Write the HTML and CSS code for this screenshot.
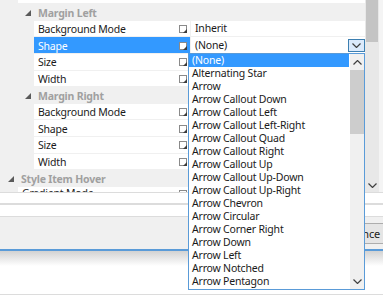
FILE: index.html
```html
<!DOCTYPE html>
<html lang="en">

<head>
    <meta charset="utf-8" />
    <title>Property Grid - Shape dropdown</title>
    <link rel="stylesheet" href="styles.css">
</head>

<body>
    <div class="window">
        <div class="grid">
            <div class="rows">
                <div class="row top-band"><div class="blank"></div></div>

                <div class="row cat sub">
                    <svg class="tri" width="6" height="6" viewBox="0 0 6 6"><path d="M6 0 L6 6 L0 6 Z" /></svg>
                    <span>Margin Left</span>
                </div>
                <div class="row prop sub">
                    <div class="name"><span>Background Mode</span><svg class="ico" width="8" height="8" viewBox="0 0 8 8"><rect x="0.5" y="0.5" width="7" height="7" /><path d="M8 4 L8 8 L4 8 Z" /></svg></div>
                    <div class="value">Inherit</div>
                </div>
                <div class="row prop sub selected">
                    <div class="name"><span>Shape</span><svg class="ico" width="8" height="8" viewBox="0 0 8 8"><rect x="0.5" y="0.5" width="7" height="7" /><path d="M8 4 L8 8 L4 8 Z" /></svg></div>
                    <div class="value">
                        <span>(None)</span>
                        <span class="drop-btn"><svg width="9" height="5" viewBox="0 0 9 5"><path d="M0.5 0.5 L4.5 4.5 L8.5 0.5" /></svg></span>
                    </div>
                </div>
                <div class="row prop sub">
                    <div class="name"><span>Size</span><svg class="ico" width="8" height="8" viewBox="0 0 8 8"><rect x="0.5" y="0.5" width="7" height="7" /><path d="M8 4 L8 8 L4 8 Z" /></svg></div>
                    <div class="value"></div>
                </div>
                <div class="row prop sub">
                    <div class="name"><span>Width</span><svg class="ico" width="8" height="8" viewBox="0 0 8 8"><rect x="0.5" y="0.5" width="7" height="7" /><path d="M8 4 L8 8 L4 8 Z" /></svg></div>
                    <div class="value"></div>
                </div>

                <div class="row cat sub">
                    <svg class="tri" width="6" height="6" viewBox="0 0 6 6"><path d="M6 0 L6 6 L0 6 Z" /></svg>
                    <span>Margin Right</span>
                </div>
                <div class="row prop sub">
                    <div class="name"><span>Background Mode</span><svg class="ico" width="8" height="8" viewBox="0 0 8 8"><rect x="0.5" y="0.5" width="7" height="7" /><path d="M8 4 L8 8 L4 8 Z" /></svg></div>
                    <div class="value"></div>
                </div>
                <div class="row prop sub">
                    <div class="name"><span>Shape</span><svg class="ico" width="8" height="8" viewBox="0 0 8 8"><rect x="0.5" y="0.5" width="7" height="7" /><path d="M8 4 L8 8 L4 8 Z" /></svg></div>
                    <div class="value"></div>
                </div>
                <div class="row prop sub">
                    <div class="name"><span>Size</span><svg class="ico" width="8" height="8" viewBox="0 0 8 8"><rect x="0.5" y="0.5" width="7" height="7" /><path d="M8 4 L8 8 L4 8 Z" /></svg></div>
                    <div class="value"></div>
                </div>
                <div class="row prop sub">
                    <div class="name"><span>Width</span><svg class="ico" width="8" height="8" viewBox="0 0 8 8"><rect x="0.5" y="0.5" width="7" height="7" /><path d="M8 4 L8 8 L4 8 Z" /></svg></div>
                    <div class="value"></div>
                </div>

                <div class="row cat">
                    <svg class="tri" width="6" height="6" viewBox="0 0 6 6"><path d="M6 0 L6 6 L0 6 Z" /></svg>
                    <span>Style Item Hover</span>
                </div>
                <div class="row prop clipped">
                    <div class="name"><span>Gradient Mode</span><svg class="ico" width="8" height="8" viewBox="0 0 8 8"><rect x="0.5" y="0.5" width="7" height="7" /><path d="M8 4 L8 8 L4 8 Z" /></svg></div>
                    <div class="value"></div>
                </div>
            </div>

            <div class="vscroll">
                <div class="track">
                    <div class="thumb"></div>
                    <svg class="arrow" width="9" height="5" viewBox="0 0 9 5"><path d="M0.5 0.5 L4.5 4.5 L8.5 0.5" /></svg>
                </div>
                <div class="edge"></div>
            </div>
        </div>

        <div class="lower">
            <div class="band line"></div>
            <div class="band white-1"></div>
            <div class="band line-2"></div>
            <div class="band white-2"></div>
            <div class="band line"></div>
            <div class="band buttons">
                <button class="btn">Appearance</button>
            </div>
            <div class="band accent"></div>
            <div class="band shade"></div>
            <div class="band white-3"></div>
            <div class="band line"></div>
        </div>

        <div class="droplist">
            <ul class="items">
                <li class="current">(None)</li>
                <li>Alternating Star</li>
                <li>Arrow</li>
                <li>Arrow Callout Down</li>
                <li>Arrow Callout Left</li>
                <li>Arrow Callout Left-Right</li>
                <li>Arrow Callout Quad</li>
                <li>Arrow Callout Right</li>
                <li>Arrow Callout Up</li>
                <li>Arrow Callout Up-Down</li>
                <li>Arrow Callout Up-Right</li>
                <li>Arrow Chevron</li>
                <li>Arrow Circular</li>
                <li>Arrow Corner Right</li>
                <li>Arrow Down</li>
                <li>Arrow Left</li>
                <li>Arrow Notched</li>
                <li>Arrow Pentagon</li>
            </ul>
            <div class="list-scroll">
                <div class="sb-btn"><svg width="9" height="5" viewBox="0 0 9 5"><path d="M0.5 4.5 L4.5 0.5 L8.5 4.5" /></svg></div>
                <div class="sb-thumb"></div>
                <div class="sb-fill"></div>
                <div class="sb-btn"><svg width="9" height="5" viewBox="0 0 9 5"><path d="M0.5 0.5 L4.5 4.5 L8.5 0.5" /></svg></div>
            </div>
        </div>
    </div>
</body>

</html>
```

FILE: styles.css
```css
:root {
    --panel-color: #f0f0f0;
    --text-color: #1a1a1a;
    --muted-color: #a0a0a0;
    --select-color: #3399ff;
    --border-blue: #5a9bd8;
    --line-color: #dcdcdc;
}

* {
    box-sizing: border-box;
}

body {
    margin: 0;
    background-color: #fff;
}

.window {
    position: relative;
    width: 383px;
    height: 297px;
    overflow: hidden;
    font-family: 'Noto Sans', 'Open Sans', sans-serif;
    font-size: 10.5px;
    letter-spacing: -0.2px;
    color: var(--text-color);
}

/* property grid */

.grid {
    display: flex;
    height: 192px;
    overflow: hidden;
    background-color: var(--panel-color);
}

.rows {
    width: 365px;
    display: flex;
    flex-direction: column;
}

.row {
    display: flex;
    align-items: center;
    flex: none;
    height: 15.64px;
    margin-bottom: 1px;
    white-space: nowrap;
}

.top-band {
    height: 3px;
    padding-left: 18px;
}

.top-band .blank {
    background-color: #fff;
    height: 100%;
    flex: 1;
}

.cat {
    padding-left: 8px;
    gap: 7px;
    font-weight: 700;
    color: var(--muted-color);
    padding-top: 2px;
}

.cat.sub {
    padding-left: 25px;
}

.tri {
    fill: #5a5a5a;
    flex: none;
}

.prop {
    padding-left: 18px;
    align-items: stretch;
    gap: 1px;
}

.prop.sub {
    padding-left: 34px;
}

.name {
    display: flex;
    align-items: center;
    justify-content: space-between;
    flex: 1;
    background-color: #fff;
    padding: 1px 3px 0 4px;
}

.clipped .name {
    align-items: flex-start;
    padding-top: 0;
    line-height: 12px;
}

.clipped .ico {
    margin-top: 3px;
}

.value {
    display: flex;
    align-items: center;
    justify-content: space-between;
    width: 174px;
    flex: none;
    background-color: #fff;
    padding-left: 4px;
}

.ico {
    flex: none;
}

.ico rect {
    fill: #fff;
    stroke: #8a8a8a;
    stroke-width: 1;
}

.ico path {
    fill: #3c3c3c;
}

.selected .name {
    background-color: var(--select-color);
    color: #fff;
}

.drop-btn {
    display: flex;
    align-items: center;
    justify-content: center;
    width: 17px;
    height: 13px;
    border: 1px solid #3c7fb1;
    background-color: #dbeafb;
}

.drop-btn path,
.arrow path,
.sb-btn path {
    fill: none;
    stroke: #404040;
    stroke-width: 1.2;
}

.vscroll {
    display: flex;
    flex: 1;
}

.track {
    width: 14px;
    display: flex;
    flex-direction: column;
    align-items: center;
    justify-content: space-between;
    background-color: #e8e8e8;
    padding-bottom: 4px;
}

.thumb {
    width: 12px;
    height: 42px;
    background-color: #c4c4c4;
}

.edge {
    flex: 1;
    background-color: #f4f4f4;
}

/* window below the grid */

.lower {
    display: flex;
    flex-direction: column;
}

.band {
    flex: none;
}

.line {
    height: 1px;
    background-color: var(--line-color);
}

.line-2 {
    height: 2px;
    background-color: var(--line-color);
}

.white-1 {
    height: 10px;
}

.white-2 {
    height: 11px;
}

.buttons {
    height: 32px;
    background-color: var(--panel-color);
    display: flex;
    align-items: center;
    justify-content: flex-end;
    padding-top: 1px;
}

.btn {
    font-family: inherit;
    font-size: 11px;
    letter-spacing: -0.2px;
    color: var(--text-color);
    background-color: #e5e5e5;
    border: 1px solid #adadad;
    height: 21px;
    padding: 0 8px;
    margin-right: -6px;
}

.accent {
    height: 2px;
    background-color: var(--border-blue);
}

.shade {
    height: 15px;
    background: linear-gradient(#d2d2d2, #fff);
}

.white-3 {
    height: 28px;
}

/* open shape list */

.droplist {
    position: absolute;
    left: 188px;
    top: 53px;
    width: 177px;
    height: 237px;
    border: 1px solid var(--border-blue);
    background-color: #fff;
    display: flex;
}

.items {
    list-style: none;
    margin: 0;
    padding: 0;
    width: 160px;
    flex: none;
}

.items li {
    height: 13px;
    line-height: 13px;
    padding-left: 3px;
    white-space: nowrap;
}

.items li.current {
    background-color: var(--select-color);
    color: #fff;
}

.list-scroll {
    margin-left: 1px;
    width: 14px;
    display: flex;
    flex-direction: column;
    background-color: var(--panel-color);
}

.sb-btn {
    height: 16px;
    display: flex;
    align-items: center;
    justify-content: center;
}

.sb-thumb {
    height: 64px;
    background-color: #cdcdcd;
}

.sb-fill {
    flex: 1;
}
```
